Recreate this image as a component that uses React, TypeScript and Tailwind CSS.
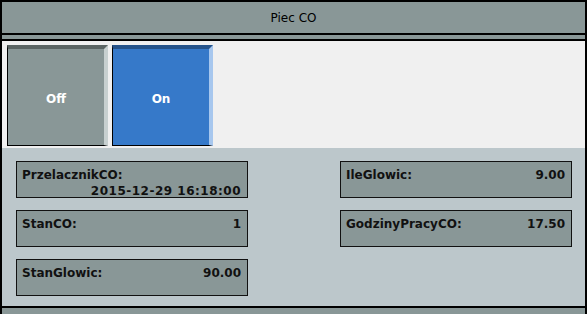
import React from "react";

const font = { fontFamily: '"DejaVu Sans", Verdana, sans-serif' };

type Row = { label: string; value: string; twoLine?: boolean };

const leftRows: Row[] = [
  { label: "PrzelacznikCO:", value: "2015-12-29 16:18:00", twoLine: true },
  { label: "StanCO:", value: "1" },
  { label: "StanGlowic:", value: "90.00" },
];

const rightRows: Row[] = [
  { label: "IleGlowic:", value: "9.00" },
  { label: "GodzinyPracyCO:", value: "17.50" },
];

function Field({ row }: { row: Row }) {
  return (
    <div className="h-[37px] w-[232px] border border-[#111] bg-[#899797] pl-[5px] pr-[6px] pt-[5px] text-[12px] font-bold leading-[16px] text-[#111]">
      {row.twoLine ? (
        <>
          <div>{row.label}</div>
          <div className="text-right tracking-[0.5px]">{row.value}</div>
        </>
      ) : (
        <div className="flex justify-between">
          <span>{row.label}</span>
          <span>{row.value}</span>
        </div>
      )}
    </div>
  );
}

function SwitchButton({ label, active }: { label: string; active?: boolean }) {
  const cls = active
    ? "bg-[#3679c9] border-t-[#25538a] border-r-[#a7c7ee]"
    : "bg-[#899797] border-t-[#5a6463] border-r-[#c7d0d0]";
  return (
    <button
      className={`flex h-[101px] w-[101px] items-center justify-center border-t-4 border-r-4 border-b border-l border-b-black border-l-black pt-[4px] text-[12px] font-bold text-white ${cls}`}
    >
      {label}
    </button>
  );
}

export default function App() {
  return (
    <div style={font} className="h-[314px] w-[587px] overflow-hidden bg-white">
      <div className="flex h-full flex-col border-x-2 border-t-2 border-black">
        <div className="flex h-[31px] items-center justify-center bg-[#899797] text-[12px] text-black">
          Piec CO
        </div>
        <div className="h-[8px] border-y-2 border-black bg-[#899797]" />
        <div className="flex h-[107px] gap-[4px] bg-[#f0f0f0] pl-[5px] pt-[4px]">
          <SwitchButton label="Off" />
          <SwitchButton label="On" active />
        </div>
        <div className="flex h-[158px] justify-between bg-[#bcc7cb] pl-[14px] pr-[13px] pt-[13px]">
          <div className="flex flex-col gap-[12px]">
            {leftRows.map((r) => (
              <Field key={r.label} row={r} />
            ))}
          </div>
          <div className="flex flex-col gap-[12px]">
            {rightRows.map((r) => (
              <Field key={r.label} row={r} />
            ))}
          </div>
        </div>
        <div className="flex-1 border-t-2 border-black bg-[#899797]" />
      </div>
    </div>
  );
}
